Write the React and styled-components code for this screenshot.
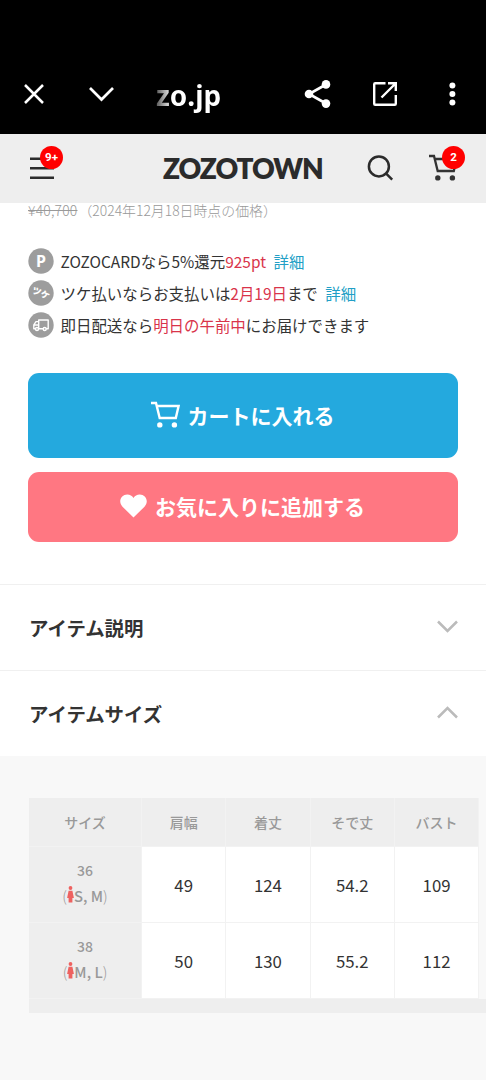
import React from "react";
import styled, { createGlobalStyle } from "styled-components";

const GlobalStyle = createGlobalStyle`
  * {
    box-sizing: border-box;
  }

  body {
    margin: 0;
    background-color: #fff;
    color: #333;
    font-family: "Noto Sans CJK JP", sans-serif;
  }

  svg {
    display: block;
    flex: none;
  }
`;

const Screen = styled.div`
  display: flex;
  flex-direction: column;
  width: 486px;
  height: 1080px;
  overflow: hidden;
`;

const BrowserBar = styled.div`
  display: flex;
  align-items: center;
  height: 134px;
  flex: none;
  padding: 54px 22px 0;
  background-color: #000;
  color: #fff;

  .down {
    margin-left: 43px;
  }

  .share {
    margin-left: auto;
  }

  .open {
    margin-left: 41px;
  }

  .more {
    margin-left: 42px;
  }
`;

const Domain = styled.span`
  margin: 2px 0 0 42px;
  font-family: "Noto Sans", sans-serif;
  font-size: 28px;
  font-weight: 700;
  line-height: 36px;
  background: linear-gradient(90deg, #555 0, #fff 16px);
  background-clip: text;
  color: transparent;
`;

const ShopHeader = styled.header`
  display: flex;
  align-items: center;
  height: 69px;
  flex: none;
  padding: 0 27px 2px;
  background-color: #eee;

  .search {
    margin-left: 42px;
  }

  .cart {
    margin-left: 34px;
  }
`;

const IconButton = styled.span`
  position: relative;
  display: block;
`;

const Badge = styled.span`
  position: absolute;
  top: ${(props) => props.$top};
  right: ${(props) => props.$right};
  width: 23px;
  height: 23px;
  border-radius: 50%;
  background-color: #f00;
  color: #fff;
  font-family: Roboto, sans-serif;
  font-size: 11.5px;
  font-weight: 700;
  line-height: 23px;
  text-align: center;
`;

const Logo = styled.span`
  width: 160px;
  margin-left: 106px;
  color: #2b2b2b;
  font-family: Lato, sans-serif;
  font-size: 28px;
  font-weight: 800;
  line-height: 34px;
  letter-spacing: -1.1px;
  white-space: nowrap;
`;

const OldPrice = styled.p`
  margin: 0;
  padding-left: 28px;
  height: 41px;
  flex: none;
  color: #999;
  font-size: 13.9px;
  font-weight: 300;
  line-height: 15px;

  s {
    margin-right: 1px;
    letter-spacing: 0.2px;
  }
`;

const BenefitList = styled.ul`
  display: grid;
  grid-auto-rows: 32.2px;
  height: 97px;
  flex: none;
  margin: 1px 0 0;
  padding: 0 28px;
  list-style: none;
`;

const Benefit = styled.li`
  display: flex;
  align-items: center;
  font-size: 15.45px;
  line-height: 24px;
  white-space: nowrap;

  svg {
    margin-right: 6.5px;
  }

  em {
    color: #d9344a;
    font-style: normal;
  }

  a {
    margin-left: 7.5px;
    color: #229fc6;
  }
`;

const Actions = styled.div`
  display: flex;
  flex-direction: column;
  gap: 14px;
  flex: none;
  padding: 31px 28px 42px;
`;

const ActionButton = styled.button`
  display: flex;
  align-items: center;
  justify-content: center;
  gap: 8px;
  height: ${(props) => props.$height};
  padding: 0 1px 2px 0;
  border: 0;
  border-radius: 11px;
  background-color: ${(props) => props.$color};
  color: #fff;
  font-family: inherit;
  font-size: 21px;
  font-weight: 700;
  line-height: 30px;
`;

const AccordionHead = styled.div`
  display: flex;
  align-items: center;
  justify-content: space-between;
  height: 86px;
  flex: none;
  padding: 1px 28px 0 29px;
  border-top: 1px solid #f0f0f0;

  h2 {
    margin: 0;
    font-size: 19.4px;
    font-weight: 700;
    line-height: 28px;
  }

  svg {
    margin-bottom: 4px;
  }
`;

const SizePanel = styled.section`
  flex: 1;
  padding: 42px 0 0 29px;
  background-color: #f8f8f8;
`;

const SizeTable = styled.div`
  display: grid;
  grid-template-columns: 113px repeat(4, 84.3px);
  grid-template-rows: 49px 76px 76px;
`;

const HeadCell = styled.div`
  display: flex;
  flex-direction: column;
  align-items: center;
  justify-content: center;
  border-right: 1px solid #f2f2f2;
  border-bottom: 1px solid #f2f2f2;
  background-color: #eee;
  color: #999;
  font-size: 14px;
  font-weight: 500;
  line-height: 26px;
`;

const SizeCell = styled(HeadCell)`
  padding-bottom: 4px;
`;

const ValueCell = styled.div`
  display: flex;
  align-items: center;
  justify-content: center;
  border-right: 1px solid #f2f2f2;
  border-bottom: 1px solid #f2f2f2;
  background-color: #fff;
  font-size: 16.8px;
`;

const FitLabel = styled.span`
  display: flex;
  align-items: center;
  font-size: 14.8px;

  i {
    font-style: normal;
    font-weight: 300;
  }

  svg {
    margin-bottom: 3px;
  }
`;

const ScrollTrack = styled.div`
  height: 14px;
  background-color: #eee;
`;

function CartIcon({ width, height, strokeWidth }) {
  return (
    <svg width={width} height={height} viewBox="0 0 29 27" fill="none" stroke="currentColor">
      <path d="M0 2H5L8.7 17H24.8L27.6 5H5.8" strokeWidth={strokeWidth} />
      <circle cx="8.8" cy="23.9" r="2.7" fill="currentColor" stroke="none" />
      <circle cx="23.4" cy="23.9" r="2.7" fill="currentColor" stroke="none" />
    </svg>
  );
}

function Chevron({ up }) {
  return (
    <svg width="21" height="13" viewBox="0 0 21 13" fill="none" stroke="#bbb" strokeWidth="2.5">
      <path d={up ? "M1 11.5L10.5 2L20 11.5" : "M1 1.5L10.5 11L20 1.5"} />
    </svg>
  );
}

function WomanIcon() {
  return (
    <svg width="7" height="17" viewBox="0 0 7 17" fill="#ee6260">
      <circle cx="3.5" cy="2" r="1.9" />
      <path d="M1.6 4.8H5.4L6.9 12H5.4V16.5H1.6V12H0.1Z" />
    </svg>
  );
}

function PointIcon() {
  return (
    <svg width="26" height="26" viewBox="0 0 26 26">
      <circle cx="13" cy="13" r="12.7" fill="#9d9d9d" />
      <text
        x="13"
        y="18.6"
        fill="#fff"
        fontFamily="Noto Sans, sans-serif"
        fontSize="16"
        fontWeight="700"
        textAnchor="middle"
      >
        P
      </text>
    </svg>
  );
}

function TsukeIcon() {
  return (
    <svg width="26" height="26" viewBox="0 0 26 26">
      <circle cx="13" cy="13" r="12.7" fill="#9d9d9d" />
      <text
        x="13"
        y="16.4"
        fill="#fff"
        fontFamily="Noto Sans CJK JP, sans-serif"
        fontSize="9"
        fontWeight="900"
        textAnchor="middle"
        transform="rotate(22 13 13)"
      >
        ツケ
      </text>
    </svg>
  );
}

function TruckIcon() {
  return (
    <svg width="26" height="26" viewBox="0 0 26 26" fill="none" stroke="#fff" strokeWidth="1.4">
      <circle cx="13" cy="13" r="12.7" fill="#9d9d9d" stroke="none" />
      <path d="M10.7 16.7V8H20.2V16.7H5.8V12.8L8 9.6H10.7M5.8 13H10.7" strokeLinejoin="round" />
      <circle cx="9" cy="17" r="1.5" fill="#9d9d9d" />
      <circle cx="16.7" cy="17" r="1.5" fill="#9d9d9d" />
    </svg>
  );
}

const columns = ["サイズ", "肩幅", "着丈", "そで丈", "バスト"];

const sizes = [
  { name: "36", fit: "S, M", values: ["49", "124", "54.2", "109"] },
  { name: "38", fit: "M, L", values: ["50", "130", "55.2", "112"] },
];

function BrowserToolbar() {
  return (
    <BrowserBar>
      <svg width="24" height="24" viewBox="0 0 24 24" fill="none" stroke="#fff" strokeWidth="2.5">
        <path d="M3 3L21 21M21 3L3 21" />
      </svg>
      <svg className="down" width="25" height="24" viewBox="0 0 25 24" fill="none" stroke="#fff" strokeWidth="2.7">
        <path d="M1 6L12.5 17.5L24 6" />
      </svg>
      <Domain>zo.jp</Domain>
      <svg className="share" width="27" height="30" viewBox="0 0 27 30" fill="#fff" stroke="#fff">
        <path d="M22 5.5L5 15L22 24.5" fill="none" strokeWidth="2.6" />
        <circle cx="22" cy="5.4" r="4.3" stroke="none" />
        <circle cx="5" cy="15" r="4.3" stroke="none" />
        <circle cx="22" cy="24.6" r="4.3" stroke="none" />
      </svg>
      <svg className="open" width="26" height="26" viewBox="0 0 26 26" fill="none" stroke="#fff" strokeWidth="2.4">
        <path d="M13.5 2.2H3.2Q2.2 2.2 2.2 3.2V22.8Q2.2 23.8 3.2 23.8H22.8Q23.8 23.8 23.8 22.8V14M16 2.2H23.8V10M23.5 2.5L9.5 16.5" />
      </svg>
      <svg className="more" width="24" height="26" viewBox="0 0 24 26" fill="#fff">
        <circle cx="12.4" cy="4.5" r="3" />
        <circle cx="12.4" cy="13" r="3" />
        <circle cx="12.4" cy="21.5" r="3" />
      </svg>
    </BrowserBar>
  );
}

function Header() {
  return (
    <ShopHeader>
      <IconButton>
        <svg width="30" height="30" viewBox="0 0 30 30" stroke="#2b2b2b" strokeWidth="2.5">
          <path d="M3 5.8H27M3 15.2H27M3 24.8H27" />
        </svg>
        <Badge $top="-7px" $right="-6px">9+</Badge>
      </IconButton>
      <Logo>ZOZOTOWN</Logo>
      <svg className="search" width="30" height="30" viewBox="0 0 30 30" fill="none" stroke="#2b2b2b" strokeWidth="2.5">
        <circle cx="13.9" cy="13.4" r="10" />
        <path d="M20.7 20.2L27.2 26.7" />
      </svg>
      <IconButton className="cart">
        <CartIcon width="29" height="27" strokeWidth="2.3" />
        <Badge $top="-8px" $right="-7px">2</Badge>
      </IconButton>
    </ShopHeader>
  );
}

function Benefits() {
  return (
    <BenefitList>
      <Benefit>
        <PointIcon />
        ZOZOCARDなら5%還元<em>925pt</em>
        <a>詳細</a>
      </Benefit>
      <Benefit>
        <TsukeIcon />
        ツケ払いならお支払いは<em>2月19日</em>まで
        <a>詳細</a>
      </Benefit>
      <Benefit>
        <TruckIcon />
        即日配送なら<em>明日の午前中</em>にお届けできます
      </Benefit>
    </BenefitList>
  );
}

function Sizes() {
  return (
    <SizePanel>
      <SizeTable>
        {columns.map((column) => (
          <HeadCell key={column}>{column}</HeadCell>
        ))}
        {sizes.map((size) => (
          <React.Fragment key={size.name}>
            <SizeCell>
              <span>{size.name}</span>
              <FitLabel>
                <i>(</i>
                <WomanIcon />
                {size.fit}
                <i>)</i>
              </FitLabel>
            </SizeCell>
            {size.values.map((value) => (
              <ValueCell key={value}>{value}</ValueCell>
            ))}
          </React.Fragment>
        ))}
      </SizeTable>
      <ScrollTrack />
    </SizePanel>
  );
}

function App() {
  return (
    <>
      <GlobalStyle />
      <Screen>
        <BrowserToolbar />
        <Header />
        <OldPrice>
          <s>¥40,700</s>（2024年12月18日時点の価格）
        </OldPrice>
        <Benefits />
        <Actions>
          <ActionButton $height="85px" $color="#24a9de">
            <CartIcon width="29" height="27" strokeWidth="2.4" />
            カートに入れる
          </ActionButton>
          <ActionButton $height="70px" $color="#ff7782">
            <svg width="27" height="24" viewBox="0 0 27 24" fill="#fff">
              <path d="M13.5 23.5L2.5 12.7C-2.5 7.2 1.5 0.6 7.2 0.6C10 0.6 12.3 2 13.5 4C14.7 2 17 0.6 19.8 0.6C25.5 0.6 29.5 7.2 24.5 12.7Z" />
            </svg>
            お気に入りに追加する
          </ActionButton>
        </Actions>
        <AccordionHead>
          <h2>アイテム説明</h2>
          <Chevron />
        </AccordionHead>
        <AccordionHead>
          <h2>アイテムサイズ</h2>
          <Chevron up />
        </AccordionHead>
        <Sizes />
      </Screen>
    </>
  );
}

export default App;
